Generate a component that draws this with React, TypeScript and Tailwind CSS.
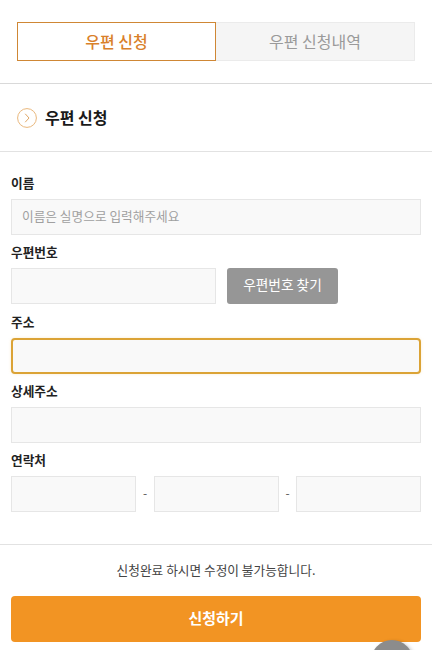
function Label({ children }: { children: React.ReactNode }) {
  return <div className="h-[18px] text-[12.7px] leading-[15px] font-bold text-[#222]">{children}</div>;
}

const inputCls = "h-[36px] bg-[#f9f9f9] border border-[#e6e6e6] outline-none px-[10px] pb-[3px] text-[12.7px] text-[#333] placeholder:text-[#a0a0a0]";

export default function App() {
  return (
    <div className="relative h-[650px] w-[432px] overflow-hidden bg-white font-['Noto_Sans_CJK_KR','Noto_Sans',sans-serif]">
      <div className="flex px-[17px] pt-[22px] pb-[22px]">
        <div className="flex h-[39px] w-[199px] items-center justify-center border border-[#cf8735] pb-[2px] text-[16px] font-medium text-[#d9802a]">우편 신청</div>
        <div className="flex h-[39px] w-[199px] items-center justify-center border border-l-0 border-[#ebebeb] bg-[#f5f5f5] pb-[2px] text-[16px] text-[#9a9a9a]">우편 신청내역</div>
      </div>
      <div className="flex h-[69px] items-center gap-[8px] border-y border-[#d9d9d9] border-b-[#e2e2e2] px-[17px]">
        <svg width="20" height="20" viewBox="0 0 20 20" fill="none">
          <circle cx="10" cy="10" r="9.4" stroke="#e9b77c" strokeWidth="1" />
          <path d="M8.2 5.8 L12 10 L8.2 14.2" stroke="#e0a868" strokeWidth="1" />
        </svg>
        <span className="-mt-[2px] text-[16px] font-bold text-[#1a1a1a]">우편 신청</span>
      </div>
      <div className="flex flex-col px-[11px] pt-[23px]">
        <div className="-mb-[1px]"><Label>이름</Label></div>
        <input className={`mt-[7px] w-full ${inputCls}`} placeholder="이름은 실명으로 입력해주세요" />
        <div className="mt-[9px]"><Label>우편번호</Label></div>
        <div className="mt-[6px] flex gap-[11px]">
          <input className={`w-[205px] ${inputCls}`} />
          <button className="h-[36px] w-[111px] rounded-[3px] bg-[#969696] pb-[3px] text-[13.7px] text-white">우편번호 찾기</button>
        </div>
        <div className="mt-[10px]"><Label>주소</Label></div>
        <input className="mt-[6px] h-[36px] w-full rounded-[4px] border-[2.5px] border-[#dba336] bg-[#f9f9f9] px-[10px] outline-none shadow-[0_0_3px_rgba(240,200,120,0.35)]" />
        <div className="mt-[9px]"><Label>상세주소</Label></div>
        <input className={`mt-[6px] w-full ${inputCls}`} />
        <div className="mt-[9px]"><Label>연락처</Label></div>
        <div className="mt-[6px] flex items-center">
          <input className={`w-[125px] ${inputCls}`} />
          <span className="w-[18px] pb-[3px] text-center text-[12px] text-[#555]">-</span>
          <input className={`w-[125px] ${inputCls}`} />
          <span className="w-[17px] pb-[3px] text-center text-[12px] text-[#555]">-</span>
          <input className={`w-[125px] ${inputCls}`} />
        </div>
      </div>
      <div className="mt-[32px] border-t border-[#e2e2e2] px-[11px] pt-[16px]">
        <p className="h-[18px] text-center text-[12.7px] leading-[18px] text-[#444]">신청완료 하시면 수정이 불가능합니다.</p>
        <button className="mt-[17px] h-[46px] w-full rounded-[4px] bg-[#f29423] pb-[2px] text-[15px] font-bold text-white">신청하기</button>
      </div>
      <div className="absolute left-[371px] top-[640px] h-[42px] w-[42px] rounded-full bg-[#8c8c8c] shadow-[2px_2px_4px_rgba(0,0,0,0.3)]" />
    </div>
  );
}
